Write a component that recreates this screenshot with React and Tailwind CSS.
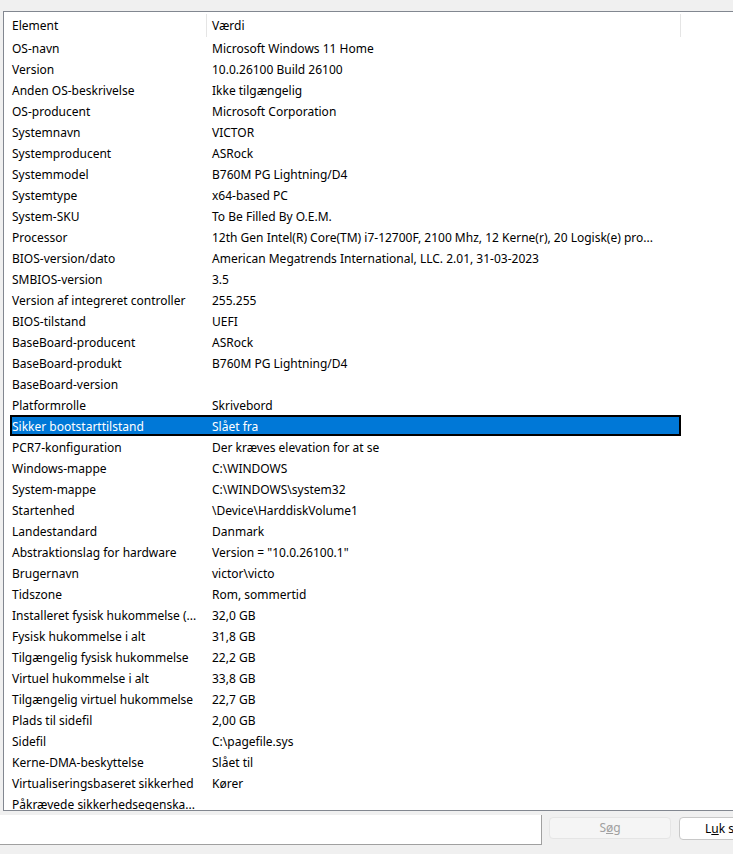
const rows = [
  ["OS-navn", "Microsoft Windows 11 Home"],
  ["Version", "10.0.26100 Build 26100"],
  ["Anden OS-beskrivelse", "Ikke tilgængelig"],
  ["OS-producent", "Microsoft Corporation"],
  ["Systemnavn", "VICTOR"],
  ["Systemproducent", "ASRock"],
  ["Systemmodel", "B760M PG Lightning/D4"],
  ["Systemtype", "x64-based PC"],
  ["System-SKU", "To Be Filled By O.E.M."],
  ["Processor", "12th Gen Intel(R) Core(TM) i7-12700F, 2100 Mhz, 12 Kerne(r), 20 Logisk(e) pro..."],
  ["BIOS-version/dato", "American Megatrends International, LLC. 2.01, 31-03-2023"],
  ["SMBIOS-version", "3.5"],
  ["Version af integreret controller", "255.255"],
  ["BIOS-tilstand", "UEFI"],
  ["BaseBoard-producent", "ASRock"],
  ["BaseBoard-produkt", "B760M PG Lightning/D4"],
  ["BaseBoard-version", ""],
  ["Platformrolle", "Skrivebord"],
  ["Sikker bootstarttilstand", "Slået fra", true],
  ["PCR7-konfiguration", "Der kræves elevation for at se"],
  ["Windows-mappe", "C:\\WINDOWS"],
  ["System-mappe", "C:\\WINDOWS\\system32"],
  ["Startenhed", "\\Device\\HarddiskVolume1"],
  ["Landestandard", "Danmark"],
  ["Abstraktionslag for hardware", "Version = \"10.0.26100.1\""],
  ["Brugernavn", "victor\\victo"],
  ["Tidszone", "Rom, sommertid"],
  ["Installeret fysisk hukommelse (...", "32,0 GB"],
  ["Fysisk hukommelse i alt", "31,8 GB"],
  ["Tilgængelig fysisk hukommelse", "22,2 GB"],
  ["Virtuel hukommelse i alt", "33,8 GB"],
  ["Tilgængelig virtuel hukommelse", "22,7 GB"],
  ["Plads til sidefil", "2,00 GB"],
  ["Sidefil", "C:\\pagefile.sys"],
  ["Kerne-DMA-beskyttelse", "Slået til"],
  ["Virtualiseringsbaseret sikkerhed", "Kører"],
  ["Påkrævede sikkerhedsegenska...", ""],
];

export default function App() {
  return (
    <div className="w-[733px] h-[854px] overflow-hidden bg-[#f0f0f0] flex flex-col text-[12px] text-black font-['Noto_Sans',sans-serif]">
      {/* list view */}
      <div className="mt-[11px] ml-[3px] w-[760px] h-[800px] shrink-0 overflow-hidden bg-white border-l border-t border-b border-[#828790]">
        <div className="flex h-[26px] items-center">
          <div className="w-[202px] pl-[8px] pt-px leading-[26px]">Element</div>
          <div className="w-px h-[23px] bg-[#e5e5e5]" />
          <div className="w-[473px] pl-[5px] pt-px leading-[26px]">Værdi</div>
          <div className="w-px h-[23px] bg-[#e5e5e5]" />
        </div>
        {rows.map(([name, value, selected]) => (
          <div key={name} className="h-[21px] flex">
            {selected ? (
              <div className="ml-[6px] w-[671px] h-[21px] -mt-px flex bg-[#0078d7] border-2 border-black text-white">
                <div className="w-[194px] pt-px leading-[17px] whitespace-nowrap overflow-hidden">{name}</div>
                <div className="pl-[6px] pt-px leading-[17px] whitespace-nowrap">{value}</div>
              </div>
            ) : (
              <>
                <div className="w-[202px] pl-[8px] leading-[21px] whitespace-nowrap overflow-hidden">{name}</div>
                <div className="w-[474px] pl-[6px] leading-[21px] whitespace-nowrap overflow-hidden">{value}</div>
              </>
            )}
          </div>
        ))}
      </div>
      {/* bottom bar */}
      <div className="mt-[4px] flex items-start">
        <div className="w-[542px] h-[30px] bg-white border-b border-r border-[#a0a0a0] shrink-0" />
        <div className="ml-[7px] mt-[2px] w-[122px] h-[22px] shrink-0 rounded-[4px] bg-[#f5f5f5] border border-[#e5e5e5] text-[#a0a0a0] flex items-center justify-center">
          S<span className="underline">ø</span>g
        </div>
        <div className="ml-[8px] mt-[2px] w-[90px] h-[23px] shrink-0 rounded-[4px] bg-white border border-[#c8c8c8] pl-[25px] leading-[21px] whitespace-nowrap">
          L<span className="underline">u</span>k s
        </div>
      </div>
    </div>
  );
}
